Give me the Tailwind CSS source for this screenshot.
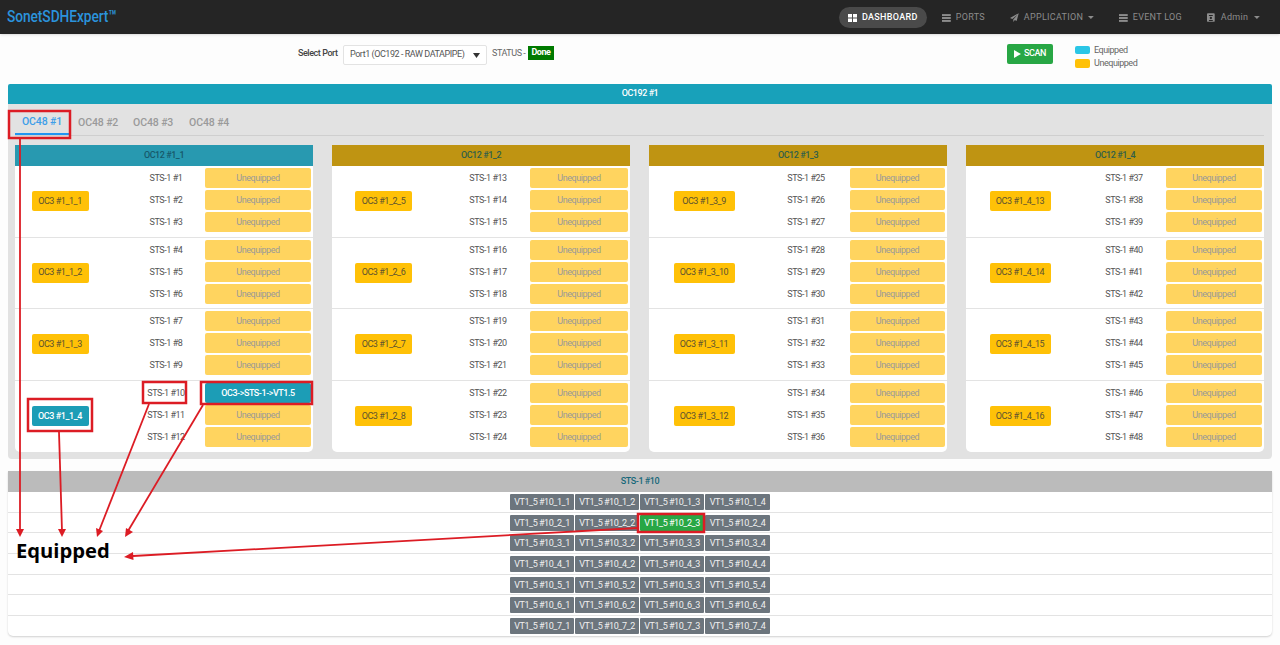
<!DOCTYPE html>
<html><head><meta charset="utf-8"><script src="https://cdn.jsdelivr.net/npm/@tailwindcss/browser@4"></script></head>
<body>
<div class="relative h-[645px] w-[1280px] overflow-hidden whitespace-nowrap bg-[#fdfdfd] [font-family:Roboto,sans-serif] text-[9px] tracking-[-0.45px] text-[#555]">
<header class="flex h-[34px] items-center justify-between bg-[#252525] pl-[7px] pr-[20px] shadow-sm">
<span class="inline-block origin-left scale-x-[0.81] text-[17px] font-medium tracking-[-0.1px] text-[#2b93dc]">SonetSDHExpert™</span>
<nav class="flex items-center pt-[1px] text-[9px] tracking-[0.3px] text-[#8c8c8c]">
<a class="flex h-[21px] w-[88px] items-center gap-[5px] rounded-full bg-[#4a4a4a] pl-[9px] font-medium text-white"><svg class="h-[8px] w-[9px]" viewBox="0 0 9 8" fill="currentColor"><rect width="4" height="3.5"/><rect x="5" width="4" height="3.5"/><rect y="4.5" width="4" height="3.5"/><rect x="5" y="4.5" width="4" height="3.5"/></svg>DASHBOARD</a>
<a class="ml-[15px] flex w-[43px] items-center gap-[5px]"><svg class="h-[8px] w-[9px]" viewBox="0 0 9 8" fill="currentColor"><rect width="9" height="2"/><rect y="3" width="9" height="2"/><rect y="6" width="9" height="2"/></svg>PORTS</a>
<a class="ml-[25px] flex w-[84px] items-center gap-[5px]"><svg class="h-[9px] w-[9px]" viewBox="0 0 9 9" fill="currentColor"><path d="M9 0 0 5l2.4 1L8 1.5 3.4 6.6V9l1.6-1.9L6.8 8z"/></svg>APPLICATION<svg class="h-[3px] w-[6px]" viewBox="0 0 6 3" fill="currentColor"><path d="M0 0h6L3 3z"/></svg></a>
<a class="ml-[25px] flex w-[63px] items-center gap-[5px]"><svg class="h-[8px] w-[9px]" viewBox="0 0 9 8" fill="currentColor"><rect width="9" height="2"/><rect y="3" width="9" height="2"/><rect y="6" width="9" height="2"/></svg>EVENT LOG</a>
<a class="ml-[25px] flex w-[53px] items-center gap-[6px]"><svg class="h-[9px] w-[8px]" viewBox="0 0 8 9" fill="currentColor"><path d="M1 0h6a1 1 0 0 1 1 1v7a1 1 0 0 1-1 1H1a1 1 0 0 1-1-1V1a1 1 0 0 1 1-1zm1 2v1h4V2zm2 1.8a1.2 1.2 0 1 0 0 2.4 1.2 1.2 0 0 0 0-2.4zM2 8h4V7H2z"/></svg>Admin<svg class="h-[3px] w-[6px]" viewBox="0 0 6 3" fill="currentColor"><path d="M0 0h6L3 3z"/></svg></a>
</nav>
</header>

<section class="flex h-[50px] items-start pl-[298px] pt-[11px]">
<span class="mt-[2px] w-[45px] font-medium text-[#444]">Select Port</span>
<div class="flex h-[20px] w-[144px] items-center justify-between rounded-[2px] border border-[#e3e3e3] bg-white pl-[6px] pr-[6px] text-[#555]"><span>Port1 (OC192 - RAW DATAPIPE)</span><svg class="h-[5px] w-[7px]" viewBox="0 0 7 5" fill="#333"><path d="M0 0h7L3.500 5z"/></svg></div>
<span class="ml-[5px] mt-[2px] w-[36px] text-[#666]">STATUS -</span>
<span class="mt-[1px] flex h-[14px] w-[26px] items-center justify-center bg-[#007a00] font-bold text-white">Done</span>
<button class="ml-[453px] mt-[-1px] flex h-[20px] w-[46px] items-center justify-center gap-[3px] rounded-[2px] bg-[#28a745] font-medium text-white"><svg class="h-[8px] w-[7px]" viewBox="0 0 7 8" fill="currentColor"><path d="M0 0l7 4-7 4z"/></svg>SCAN</button>
<div class="ml-[22px] mt-[0px] grid grid-cols-[15px_auto] items-center gap-x-[4px] gap-y-[3px] leading-[10px] text-[#666]">
<span class="h-[8px] rounded-[2px] bg-[#2bc6e6]"></span><span>Equipped</span>
<span class="h-[9px] rounded-[2px] bg-[#ffc107]"></span><span>Unequipped</span>
</div>
</section>

<div class="mx-[8px] flex h-[20px] items-center justify-center rounded-t-[2px] bg-[#18a1ba] font-medium text-white">OC192 #1</div>

<main class="mx-[8px] h-[355px] rounded-b-[4px] bg-[#e2e2e2] pl-[7px] pr-[8px]">
<div class="flex h-[32px] items-end border-b border-[#cfcfcf] text-[10.5px] font-medium tracking-[-0.1px] text-[#9a9a9a]">
<a class="flex h-[30px] w-[54px] items-center justify-center border-b-2 border-[#2196f3] pt-[5px] text-[#3d9ee8]">OC48 #1</a>
<a class="ml-[9px] flex h-[30px] w-[39px] items-center pt-[5px]">OC48 #2</a>
<a class="ml-[16px] flex h-[30px] w-[40px] items-center pt-[5px]">OC48 #3</a>
<a class="ml-[16px] flex h-[30px] w-[39px] items-center pt-[5px]">OC48 #4</a>
</div>
<div class="mt-[9px] flex justify-between">

<article class="h-[307px] w-[298px] rounded-b-[5px] bg-white">
<h3 class="flex h-[21px] items-center justify-center bg-[#2899b0] text-[#17586a] font-medium">OC12 #1_1</h3>
<div class="flex h-[71.5px] border-b border-[#e3e3e3]"><div class="flex w-[112px] items-center justify-center pr-[22px]"><span class="flex h-[20px] w-[57px] items-center justify-center rounded-[2px] bg-[#ffc107] text-[#5c5230]">OC3 #1_1_1</span></div>
<div class="grid grid-cols-[78px_106px] gap-y-[2px] self-start pt-[2px] text-center leading-[20px]"><span>STS-1 #1</span><span class="h-[20px] rounded-[2px] bg-[#ffd45f] text-[#999]">Unequipped</span><span>STS-1 #2</span><span class="h-[20px] rounded-[2px] bg-[#ffd45f] text-[#999]">Unequipped</span><span>STS-1 #3</span><span class="h-[20px] rounded-[2px] bg-[#ffd45f] text-[#999]">Unequipped</span></div></div>
<div class="flex h-[71.5px] border-b border-[#e3e3e3]"><div class="flex w-[112px] items-center justify-center pr-[22px]"><span class="flex h-[20px] w-[57px] items-center justify-center rounded-[2px] bg-[#ffc107] text-[#5c5230]">OC3 #1_1_2</span></div>
<div class="grid grid-cols-[78px_106px] gap-y-[2px] self-start pt-[2px] text-center leading-[20px]"><span>STS-1 #4</span><span class="h-[20px] rounded-[2px] bg-[#ffd45f] text-[#999]">Unequipped</span><span>STS-1 #5</span><span class="h-[20px] rounded-[2px] bg-[#ffd45f] text-[#999]">Unequipped</span><span>STS-1 #6</span><span class="h-[20px] rounded-[2px] bg-[#ffd45f] text-[#999]">Unequipped</span></div></div>
<div class="flex h-[71.5px] border-b border-[#e3e3e3]"><div class="flex w-[112px] items-center justify-center pr-[22px]"><span class="flex h-[20px] w-[57px] items-center justify-center rounded-[2px] bg-[#ffc107] text-[#5c5230]">OC3 #1_1_3</span></div>
<div class="grid grid-cols-[78px_106px] gap-y-[2px] self-start pt-[2px] text-center leading-[20px]"><span>STS-1 #7</span><span class="h-[20px] rounded-[2px] bg-[#ffd45f] text-[#999]">Unequipped</span><span>STS-1 #8</span><span class="h-[20px] rounded-[2px] bg-[#ffd45f] text-[#999]">Unequipped</span><span>STS-1 #9</span><span class="h-[20px] rounded-[2px] bg-[#ffd45f] text-[#999]">Unequipped</span></div></div>
<div class="flex h-[71.5px]"><div class="flex w-[112px] items-center justify-center pr-[22px]"><span class="flex h-[20px] w-[57px] items-center justify-center rounded-[2px] bg-[#1c9db6] font-medium text-white">OC3 #1_1_4</span></div>
<div class="grid grid-cols-[78px_106px] gap-y-[2px] self-start pt-[2px] text-center leading-[20px]"><span>STS-1 #10</span><span class="h-[20px] rounded-[2px] bg-[#1c9db6] font-medium text-white">OC3-&gt;STS-1-&gt;VT1.5</span><span>STS-1 #11</span><span class="h-[20px] rounded-[2px] bg-[#ffd45f] text-[#999]">Unequipped</span><span>STS-1 #12</span><span class="h-[20px] rounded-[2px] bg-[#ffd45f] text-[#999]">Unequipped</span></div></div>
</article>

<article class="h-[307px] w-[298px] rounded-b-[5px] bg-white">
<h3 class="flex h-[21px] items-center justify-center bg-[#bf9412] text-[#2f5f4a] font-medium">OC12 #1_2</h3>
<div class="flex h-[71.5px] border-b border-[#e3e3e3]"><div class="flex w-[114px] items-center justify-center pr-[11px]"><span class="flex h-[20px] w-[57px] items-center justify-center rounded-[2px] bg-[#ffc107] text-[#5c5230]">OC3 #1_2_5</span></div>
<div class="grid grid-cols-[84px_98px] gap-y-[2px] self-start pt-[2px] text-center leading-[20px]"><span>STS-1 #13</span><span class="h-[20px] rounded-[2px] bg-[#ffd45f] text-[#999]">Unequipped</span><span>STS-1 #14</span><span class="h-[20px] rounded-[2px] bg-[#ffd45f] text-[#999]">Unequipped</span><span>STS-1 #15</span><span class="h-[20px] rounded-[2px] bg-[#ffd45f] text-[#999]">Unequipped</span></div></div>
<div class="flex h-[71.5px] border-b border-[#e3e3e3]"><div class="flex w-[114px] items-center justify-center pr-[11px]"><span class="flex h-[20px] w-[57px] items-center justify-center rounded-[2px] bg-[#ffc107] text-[#5c5230]">OC3 #1_2_6</span></div>
<div class="grid grid-cols-[84px_98px] gap-y-[2px] self-start pt-[2px] text-center leading-[20px]"><span>STS-1 #16</span><span class="h-[20px] rounded-[2px] bg-[#ffd45f] text-[#999]">Unequipped</span><span>STS-1 #17</span><span class="h-[20px] rounded-[2px] bg-[#ffd45f] text-[#999]">Unequipped</span><span>STS-1 #18</span><span class="h-[20px] rounded-[2px] bg-[#ffd45f] text-[#999]">Unequipped</span></div></div>
<div class="flex h-[71.5px] border-b border-[#e3e3e3]"><div class="flex w-[114px] items-center justify-center pr-[11px]"><span class="flex h-[20px] w-[57px] items-center justify-center rounded-[2px] bg-[#ffc107] text-[#5c5230]">OC3 #1_2_7</span></div>
<div class="grid grid-cols-[84px_98px] gap-y-[2px] self-start pt-[2px] text-center leading-[20px]"><span>STS-1 #19</span><span class="h-[20px] rounded-[2px] bg-[#ffd45f] text-[#999]">Unequipped</span><span>STS-1 #20</span><span class="h-[20px] rounded-[2px] bg-[#ffd45f] text-[#999]">Unequipped</span><span>STS-1 #21</span><span class="h-[20px] rounded-[2px] bg-[#ffd45f] text-[#999]">Unequipped</span></div></div>
<div class="flex h-[71.5px]"><div class="flex w-[114px] items-center justify-center pr-[11px]"><span class="flex h-[20px] w-[57px] items-center justify-center rounded-[2px] bg-[#ffc107] text-[#5c5230]">OC3 #1_2_8</span></div>
<div class="grid grid-cols-[84px_98px] gap-y-[2px] self-start pt-[2px] text-center leading-[20px]"><span>STS-1 #22</span><span class="h-[20px] rounded-[2px] bg-[#ffd45f] text-[#999]">Unequipped</span><span>STS-1 #23</span><span class="h-[20px] rounded-[2px] bg-[#ffd45f] text-[#999]">Unequipped</span><span>STS-1 #24</span><span class="h-[20px] rounded-[2px] bg-[#ffd45f] text-[#999]">Unequipped</span></div></div>
</article>

<article class="h-[307px] w-[298px] rounded-b-[5px] bg-white">
<h3 class="flex h-[21px] items-center justify-center bg-[#bf9412] text-[#2f5f4a] font-medium">OC12 #1_3</h3>
<div class="flex h-[71.5px] border-b border-[#e3e3e3]"><div class="flex w-[113px] items-center justify-center pr-[3px]"><span class="flex h-[20px] w-[61px] items-center justify-center rounded-[2px] bg-[#ffc107] text-[#5c5230]">OC3 #1_3_9</span></div>
<div class="grid grid-cols-[88px_95px] gap-y-[2px] self-start pt-[2px] text-center leading-[20px]"><span>STS-1 #25</span><span class="h-[20px] rounded-[2px] bg-[#ffd45f] text-[#999]">Unequipped</span><span>STS-1 #26</span><span class="h-[20px] rounded-[2px] bg-[#ffd45f] text-[#999]">Unequipped</span><span>STS-1 #27</span><span class="h-[20px] rounded-[2px] bg-[#ffd45f] text-[#999]">Unequipped</span></div></div>
<div class="flex h-[71.5px] border-b border-[#e3e3e3]"><div class="flex w-[113px] items-center justify-center pr-[3px]"><span class="flex h-[20px] w-[61px] items-center justify-center rounded-[2px] bg-[#ffc107] text-[#5c5230]">OC3 #1_3_10</span></div>
<div class="grid grid-cols-[88px_95px] gap-y-[2px] self-start pt-[2px] text-center leading-[20px]"><span>STS-1 #28</span><span class="h-[20px] rounded-[2px] bg-[#ffd45f] text-[#999]">Unequipped</span><span>STS-1 #29</span><span class="h-[20px] rounded-[2px] bg-[#ffd45f] text-[#999]">Unequipped</span><span>STS-1 #30</span><span class="h-[20px] rounded-[2px] bg-[#ffd45f] text-[#999]">Unequipped</span></div></div>
<div class="flex h-[71.5px] border-b border-[#e3e3e3]"><div class="flex w-[113px] items-center justify-center pr-[3px]"><span class="flex h-[20px] w-[61px] items-center justify-center rounded-[2px] bg-[#ffc107] text-[#5c5230]">OC3 #1_3_11</span></div>
<div class="grid grid-cols-[88px_95px] gap-y-[2px] self-start pt-[2px] text-center leading-[20px]"><span>STS-1 #31</span><span class="h-[20px] rounded-[2px] bg-[#ffd45f] text-[#999]">Unequipped</span><span>STS-1 #32</span><span class="h-[20px] rounded-[2px] bg-[#ffd45f] text-[#999]">Unequipped</span><span>STS-1 #33</span><span class="h-[20px] rounded-[2px] bg-[#ffd45f] text-[#999]">Unequipped</span></div></div>
<div class="flex h-[71.5px]"><div class="flex w-[113px] items-center justify-center pr-[3px]"><span class="flex h-[20px] w-[61px] items-center justify-center rounded-[2px] bg-[#ffc107] text-[#5c5230]">OC3 #1_3_12</span></div>
<div class="grid grid-cols-[88px_95px] gap-y-[2px] self-start pt-[2px] text-center leading-[20px]"><span>STS-1 #34</span><span class="h-[20px] rounded-[2px] bg-[#ffd45f] text-[#999]">Unequipped</span><span>STS-1 #35</span><span class="h-[20px] rounded-[2px] bg-[#ffd45f] text-[#999]">Unequipped</span><span>STS-1 #36</span><span class="h-[20px] rounded-[2px] bg-[#ffd45f] text-[#999]">Unequipped</span></div></div>
</article>

<article class="h-[307px] w-[298px] rounded-b-[5px] bg-white">
<h3 class="flex h-[21px] items-center justify-center bg-[#bf9412] text-[#2f5f4a] font-medium">OC12 #1_4</h3>
<div class="flex h-[71.5px] border-b border-[#e3e3e3]"><div class="flex w-[116px] items-center justify-center pr-[8px]"><span class="flex h-[20px] w-[61px] items-center justify-center rounded-[2px] bg-[#ffc107] text-[#5c5230]">OC3 #1_4_13</span></div>
<div class="grid grid-cols-[84px_96px] gap-y-[2px] self-start pt-[2px] text-center leading-[20px]"><span>STS-1 #37</span><span class="h-[20px] rounded-[2px] bg-[#ffd45f] text-[#999]">Unequipped</span><span>STS-1 #38</span><span class="h-[20px] rounded-[2px] bg-[#ffd45f] text-[#999]">Unequipped</span><span>STS-1 #39</span><span class="h-[20px] rounded-[2px] bg-[#ffd45f] text-[#999]">Unequipped</span></div></div>
<div class="flex h-[71.5px] border-b border-[#e3e3e3]"><div class="flex w-[116px] items-center justify-center pr-[8px]"><span class="flex h-[20px] w-[61px] items-center justify-center rounded-[2px] bg-[#ffc107] text-[#5c5230]">OC3 #1_4_14</span></div>
<div class="grid grid-cols-[84px_96px] gap-y-[2px] self-start pt-[2px] text-center leading-[20px]"><span>STS-1 #40</span><span class="h-[20px] rounded-[2px] bg-[#ffd45f] text-[#999]">Unequipped</span><span>STS-1 #41</span><span class="h-[20px] rounded-[2px] bg-[#ffd45f] text-[#999]">Unequipped</span><span>STS-1 #42</span><span class="h-[20px] rounded-[2px] bg-[#ffd45f] text-[#999]">Unequipped</span></div></div>
<div class="flex h-[71.5px] border-b border-[#e3e3e3]"><div class="flex w-[116px] items-center justify-center pr-[8px]"><span class="flex h-[20px] w-[61px] items-center justify-center rounded-[2px] bg-[#ffc107] text-[#5c5230]">OC3 #1_4_15</span></div>
<div class="grid grid-cols-[84px_96px] gap-y-[2px] self-start pt-[2px] text-center leading-[20px]"><span>STS-1 #43</span><span class="h-[20px] rounded-[2px] bg-[#ffd45f] text-[#999]">Unequipped</span><span>STS-1 #44</span><span class="h-[20px] rounded-[2px] bg-[#ffd45f] text-[#999]">Unequipped</span><span>STS-1 #45</span><span class="h-[20px] rounded-[2px] bg-[#ffd45f] text-[#999]">Unequipped</span></div></div>
<div class="flex h-[71.5px]"><div class="flex w-[116px] items-center justify-center pr-[8px]"><span class="flex h-[20px] w-[61px] items-center justify-center rounded-[2px] bg-[#ffc107] text-[#5c5230]">OC3 #1_4_16</span></div>
<div class="grid grid-cols-[84px_96px] gap-y-[2px] self-start pt-[2px] text-center leading-[20px]"><span>STS-1 #46</span><span class="h-[20px] rounded-[2px] bg-[#ffd45f] text-[#999]">Unequipped</span><span>STS-1 #47</span><span class="h-[20px] rounded-[2px] bg-[#ffd45f] text-[#999]">Unequipped</span><span>STS-1 #48</span><span class="h-[20px] rounded-[2px] bg-[#ffd45f] text-[#999]">Unequipped</span></div></div>
</article>
</div>
</main>

<section class="mx-[8px] mt-[12px] h-[165px] rounded-b-[5px] bg-white shadow-[0_1px_2px_#0000002e]">
<h3 class="flex h-[21px] items-center justify-center bg-[#bbbbbb] font-medium text-[#17687a]">STS-1 #10</h3>
<div class="flex h-[20.7px] items-center justify-center gap-[1px] border-b border-[#e3e3e3] text-[#f0f0f0]"><span class="h-[16px] w-[64px] rounded-[1px] bg-[#6c757d] text-center leading-[16px]">VT1_5 #10_1_1</span><span class="h-[16px] w-[64px] rounded-[1px] bg-[#6c757d] text-center leading-[16px]">VT1_5 #10_1_2</span><span class="h-[16px] w-[64px] rounded-[1px] bg-[#6c757d] text-center leading-[16px]">VT1_5 #10_1_3</span><span class="h-[16px] w-[65px] rounded-[1px] bg-[#6c757d] text-center leading-[16px]">VT1_5 #10_1_4</span></div>
<div class="flex h-[20.7px] items-center justify-center gap-[1px] border-b border-[#e3e3e3] text-[#f0f0f0]"><span class="h-[16px] w-[64px] rounded-[1px] bg-[#6c757d] text-center leading-[16px]">VT1_5 #10_2_1</span><span class="h-[16px] w-[64px] rounded-[1px] bg-[#6c757d] text-center leading-[16px]">VT1_5 #10_2_2</span><span class="h-[16px] w-[64px] rounded-[1px] bg-[#28a745] text-center leading-[16px] text-white">VT1_5 #10_2_3</span><span class="h-[16px] w-[65px] rounded-[1px] bg-[#6c757d] text-center leading-[16px]">VT1_5 #10_2_4</span></div>
<div class="flex h-[20.7px] items-center justify-center gap-[1px] border-b border-[#e3e3e3] text-[#f0f0f0]"><span class="h-[16px] w-[64px] rounded-[1px] bg-[#6c757d] text-center leading-[16px]">VT1_5 #10_3_1</span><span class="h-[16px] w-[64px] rounded-[1px] bg-[#6c757d] text-center leading-[16px]">VT1_5 #10_3_2</span><span class="h-[16px] w-[64px] rounded-[1px] bg-[#6c757d] text-center leading-[16px]">VT1_5 #10_3_3</span><span class="h-[16px] w-[65px] rounded-[1px] bg-[#6c757d] text-center leading-[16px]">VT1_5 #10_3_4</span></div>
<div class="flex h-[20.7px] items-center justify-center gap-[1px] border-b border-[#e3e3e3] text-[#f0f0f0]"><span class="h-[16px] w-[64px] rounded-[1px] bg-[#6c757d] text-center leading-[16px]">VT1_5 #10_4_1</span><span class="h-[16px] w-[64px] rounded-[1px] bg-[#6c757d] text-center leading-[16px]">VT1_5 #10_4_2</span><span class="h-[16px] w-[64px] rounded-[1px] bg-[#6c757d] text-center leading-[16px]">VT1_5 #10_4_3</span><span class="h-[16px] w-[65px] rounded-[1px] bg-[#6c757d] text-center leading-[16px]">VT1_5 #10_4_4</span></div>
<div class="flex h-[20.7px] items-center justify-center gap-[1px] border-b border-[#e3e3e3] text-[#f0f0f0]"><span class="h-[16px] w-[64px] rounded-[1px] bg-[#6c757d] text-center leading-[16px]">VT1_5 #10_5_1</span><span class="h-[16px] w-[64px] rounded-[1px] bg-[#6c757d] text-center leading-[16px]">VT1_5 #10_5_2</span><span class="h-[16px] w-[64px] rounded-[1px] bg-[#6c757d] text-center leading-[16px]">VT1_5 #10_5_3</span><span class="h-[16px] w-[65px] rounded-[1px] bg-[#6c757d] text-center leading-[16px]">VT1_5 #10_5_4</span></div>
<div class="flex h-[20.7px] items-center justify-center gap-[1px] border-b border-[#e3e3e3] text-[#f0f0f0]"><span class="h-[16px] w-[64px] rounded-[1px] bg-[#6c757d] text-center leading-[16px]">VT1_5 #10_6_1</span><span class="h-[16px] w-[64px] rounded-[1px] bg-[#6c757d] text-center leading-[16px]">VT1_5 #10_6_2</span><span class="h-[16px] w-[64px] rounded-[1px] bg-[#6c757d] text-center leading-[16px]">VT1_5 #10_6_3</span><span class="h-[16px] w-[65px] rounded-[1px] bg-[#6c757d] text-center leading-[16px]">VT1_5 #10_6_4</span></div>
<div class="flex h-[20.7px] items-center justify-center gap-[1px] text-[#f0f0f0]"><span class="h-[16px] w-[64px] rounded-[1px] bg-[#6c757d] text-center leading-[16px]">VT1_5 #10_7_1</span><span class="h-[16px] w-[64px] rounded-[1px] bg-[#6c757d] text-center leading-[16px]">VT1_5 #10_7_2</span><span class="h-[16px] w-[64px] rounded-[1px] bg-[#6c757d] text-center leading-[16px]">VT1_5 #10_7_3</span><span class="h-[16px] w-[65px] rounded-[1px] bg-[#6c757d] text-center leading-[16px]">VT1_5 #10_7_4</span></div>
</section>

<svg class="pointer-events-none absolute left-0 top-0 h-[645px] w-[1280px]" viewBox="0 0 1280 645" fill="none" stroke="#dc1c24" stroke-width="2.500">
<rect x="9" y="111" width="61" height="27"/>
<rect x="28" y="399" width="64" height="32"/>
<rect x="143" y="382" width="43" height="21"/>
<rect x="201" y="382" width="111" height="22"/>
<rect x="638" y="514" width="66" height="18"/>
<g stroke-width="1.800">
<path d="M20 138V531"/>
<path d="M59 432 62 531"/>
<path d="M149 404 99 531"/>
<path d="M203 405 128 531"/>
<path d="M638 528 133 556"/>
</g>
<g fill="#dc1c24" stroke="none">
<path d="M20 537 16 529H24z"/>
<path d="M62 537 58 529H66z"/>
<path d="M97 537 96 528 103 531z"/>
<path d="M125 537 126 528 133 532z"/>
<path d="M124 557 133 552 133.500 560z"/>
</g>
</svg>
<span class="absolute left-[16px] top-[537px] [font-family:'Open_Sans',sans-serif] text-[20.2px] font-bold leading-[27px] tracking-[0] text-black">Equipped</span>
</div>
</body></html>
